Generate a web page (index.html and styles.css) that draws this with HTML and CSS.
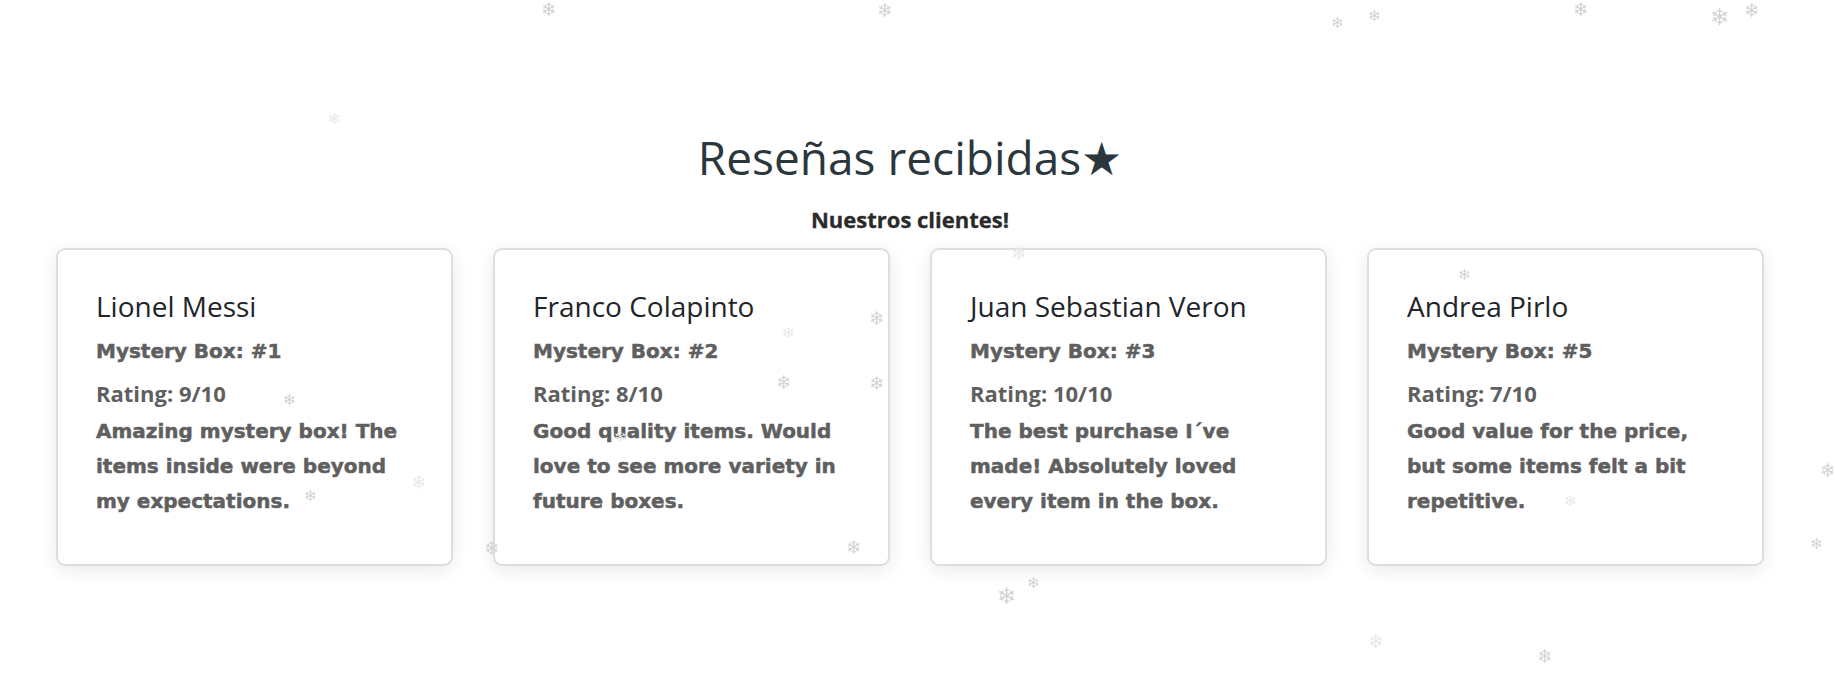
FILE: index.html
```html
<!DOCTYPE html>
<html lang="es">
<head>
<meta charset="utf-8">
<title>Reseñas recibidas</title>
<link rel="stylesheet" href="styles.css">
</head>
<body>
<main class="page">
  <section class="reviews">
    <h1 class="reviews-title">Reseñas recibidas★</h1>
    <p class="reviews-subtitle">Nuestros clientes!</p>
    <div class="cards">
      <article class="card">
        <h2 class="card-name">Lionel Messi</h2>
        <h3 class="card-box">Mystery Box: #1</h3>
        <p class="card-rating">Rating: 9/10</p>
        <p class="card-text">Amazing mystery box! The items inside were beyond my expectations.</p>
      </article>
      <article class="card">
        <h2 class="card-name">Franco Colapinto</h2>
        <h3 class="card-box">Mystery Box: #2</h3>
        <p class="card-rating">Rating: 8/10</p>
        <p class="card-text">Good quality items. Would love to see more variety in future boxes.</p>
      </article>
      <article class="card">
        <h2 class="card-name">Juan Sebastian Veron</h2>
        <h3 class="card-box">Mystery Box: #3</h3>
        <p class="card-rating">Rating: 10/10</p>
        <p class="card-text">The best purchase I´ve made! Absolutely loved every item in the box.</p>
      </article>
      <article class="card">
        <h2 class="card-name">Andrea Pirlo</h2>
        <h3 class="card-box">Mystery Box: #5</h3>
        <p class="card-rating">Rating: 7/10</p>
        <p class="card-text">Good value for the price, but some items felt a bit repetitive.</p>
      </article>
    </div>
  </section>
</main>
<div class="snow" aria-hidden="true">
  <span class="flake f-m" style="left:541px;top:0px">❄</span>
  <span class="flake f-m" style="left:877px;top:1px">❄</span>
  <span class="flake f-s" style="left:1331px;top:16px">❄</span>
  <span class="flake f-s" style="left:1368px;top:9px">❄</span>
  <span class="flake f-m" style="left:1573px;top:0px">❄</span>
  <span class="flake f-l" style="left:1710px;top:6px">❄</span>
  <span class="flake f-m" style="left:1744px;top:1px">❄</span>
  <span class="flake f-s faint" style="left:328px;top:112px">❄</span>
  <span class="flake f-s" style="left:283px;top:393px">❄</span>
  <span class="flake f-m faint" style="left:411px;top:473px">❄</span>
  <span class="flake f-s" style="left:304px;top:489px">❄</span>
  <span class="flake f-m" style="left:484px;top:539px">❄</span>
  <span class="flake f-m" style="left:869px;top:309px">❄</span>
  <span class="flake f-m" style="left:776px;top:373px">❄</span>
  <span class="flake f-m" style="left:869px;top:374px">❄</span>
  <span class="flake f-s faint" style="left:782px;top:326px">❄</span>
  <span class="flake f-s faint" style="left:614px;top:430px">❄</span>
  <span class="flake f-m" style="left:846px;top:538px">❄</span>
  <span class="flake f-l" style="left:997px;top:585px">❄</span>
  <span class="flake f-s" style="left:1027px;top:576px">❄</span>
  <span class="flake f-m faint" style="left:1011px;top:244px">❄</span>
  <span class="flake f-s" style="left:1458px;top:268px">❄</span>
  <span class="flake f-s faint" style="left:1564px;top:494px">❄</span>
  <span class="flake f-m" style="left:1820px;top:461px">❄</span>
  <span class="flake f-s" style="left:1810px;top:537px">❄</span>
  <span class="flake f-m faint" style="left:1368px;top:632px">❄</span>
  <span class="flake f-m" style="left:1537px;top:647px">❄</span>
</div>
</body>
</html>
```
FILE: styles.css
```css
html, body {
  margin: 0;
  padding: 0;
  background: #ffffff;
}

body {
  font-family: "Open Sans", "Noto Sans", sans-serif;
  color: #212529;
  overflow: hidden;
  height: 682px;
}

.page {
  width: 1820px;
}

.reviews {
  display: flex;
  flex-direction: column;
  align-items: center;
  padding-top: 125px;
}

.reviews-title {
  margin: 0;
  font-family: "Open Sans", sans-serif;
  font-weight: 400;
  font-size: 46px;
  line-height: 64px;
  color: #2b373d;
}

.reviews-subtitle {
  margin: 16px 0 0;
  font-family: "Open Sans", sans-serif;
  font-weight: 700;
  font-size: 22px;
  line-height: 28px;
  color: #2a2a2a;
  -webkit-text-stroke: 0.3px #2a2a2a;
}

.cards {
  display: flex;
  gap: 40px;
  margin-top: 15px;
}

.card {
  box-sizing: border-box;
  width: 397px;
  height: 318px;
  padding: 38px 38px 0;
  border: 2px solid #dedede;
  border-radius: 9px;
  background: #ffffff;
  box-shadow: 0 4px 18px rgba(0, 0, 0, 0.09);
}

.card-name {
  margin: 0;
  font-family: "Open Sans", sans-serif;
  font-weight: 400;
  font-size: 28px;
  line-height: 36px;
  color: #212529;
}

.card-box {
  margin: 12px 0 0;
  font-family: "DejaVu Sans", sans-serif;
  font-weight: 700;
  font-size: 20px;
  line-height: 30px;
  color: #5f5f5f;
  -webkit-text-stroke: 0.5px #5f5f5f;
}

.card-rating {
  margin: 13px 0 0;
  font-family: "Open Sans", sans-serif;
  font-weight: 700;
  font-size: 22px;
  line-height: 28px;
  color: #5f5f5f;
}

.card-text {
  margin: 7px 0 0;
  font-family: "DejaVu Sans", sans-serif;
  font-weight: 700;
  font-size: 20px;
  line-height: 35px;
  color: #5f5f5f;
  -webkit-text-stroke: 0.5px #5f5f5f;
}

.snow {
  position: absolute;
  inset: 0;
  pointer-events: none;
  overflow: hidden;
}

.flake {
  position: absolute;
  color: #d2d2d2;
  line-height: 1;
  font-family: "DejaVu Sans", sans-serif;
  filter: blur(0.3px);
}

.f-s { font-size: 15px; }
.f-m { font-size: 19px; }
.f-l { font-size: 23px; }
.faint { color: #e8e8e8; }
```
